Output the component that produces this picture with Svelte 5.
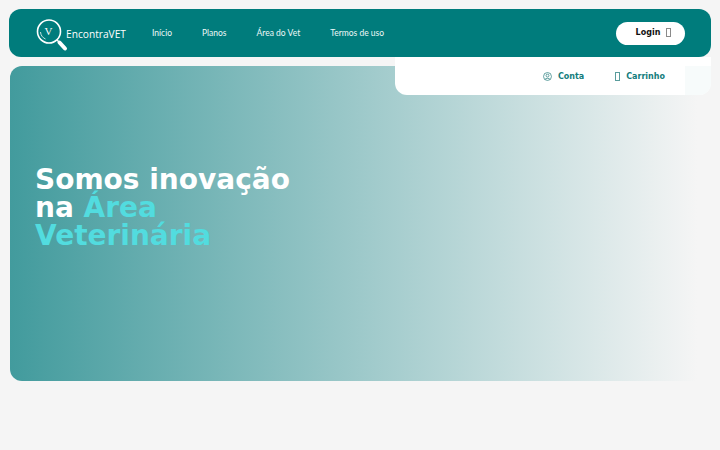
<script>
  const links = ['Início', 'Planos', 'Área do Vet', 'Termos de uso']
</script>

<div class="page">
  <header class="top">
    <a class="brand" href="#home">
      <svg class="logo" width="32" height="34" viewBox="0 0 32 34" aria-hidden="true">
        <circle cx="13" cy="12.5" r="11.5" fill="none" stroke="#fff" stroke-width="1.6" />
        <path d="M4.5 13a8.5 8.5 0 0 0 5 7" fill="none" stroke="#fff" stroke-width="0.8" />
        <path d="M21 21l2 2" stroke="#fff" stroke-width="1.5" />
        <path d="M23.5 23.5l5.5 6" stroke="#fff" stroke-width="4" stroke-linecap="round" />
        <text x="12.5" y="15.5" text-anchor="middle" class="v">V</text>
      </svg>
      <span class="name">EncontraVET</span>
    </a>
    <nav class="links">
      {#each links as l}
        <a href="#home">{l}</a>
      {/each}
    </nav>
    <button class="login">Login <i class="tofu"></i></button>
  </header>

  <div class="panel">
    <a class="act" href="#home">
      <svg width="9" height="9" viewBox="0 0 10 10" aria-hidden="true">
        <circle cx="5" cy="5" r="4.4" fill="none" stroke="#2a7f7f" stroke-width="0.8" />
        <circle cx="5" cy="4" r="1.6" fill="none" stroke="#2a7f7f" stroke-width="0.8" />
        <path d="M2.2 8.2C3 6.6 7 6.6 7.8 8.2" fill="none" stroke="#2a7f7f" stroke-width="0.8" />
      </svg>
      Conta
    </a>
    <a class="act" href="#home"><i class="tofu teal"></i> Carrinho</a>
  </div>

  <section class="hero">
    <h1>Somos inovação<br />na <span>Área Veterinária</span></h1>
  </section>
</div>

<style>
  :global(body) { background: #f5f5f5; }
  .page { position: relative; padding: 9px 9px 0; height: 441px; box-sizing: border-box; width: 720px; }
  .top { height: 48px; background: #007c7c; border-radius: 12px; display: flex; align-items: center; padding: 0 26px 0 27px; }
  .brand { display: flex; align-items: center; text-decoration: none; margin-top: 5px; }
  .logo { display: block; }
  .v { font: 11px "Liberation Serif", serif; fill: #fff; }
  .name { font: 10.2px "Open Sans", sans-serif; color: #fff; margin-left: -2px; margin-top: -3px; }
  .links { display: flex; gap: 30px; margin-left: 26px; }
  .links a { font: 8.5px Lato, sans-serif; color: #eef8f8; text-decoration: none; }
  .login { margin-left: auto; width: 69px; height: 23px; border: 0; border-radius: 12px; background: #fff; color: #111; font: bold 8px "DejaVu Sans", sans-serif; padding: 0 0 2px 6px; display: flex; align-items: center; justify-content: center; gap: 6px; }
  .tofu { display: inline-block; width: 3px; height: 7px; border: 1px solid #8a8a8a; }
  .tofu.teal { border-color: #5a9c9c; }
  .panel { position: absolute; left: 395px; top: 57px; width: 316px; height: 38px; background: #fff; border-radius: 0 0 12px 12px; display: flex; justify-content: flex-end; align-items: center; gap: 31px; padding-right: 46px; box-sizing: border-box; }
  .panel::after { content: ""; position: absolute; right: 0; bottom: 0; width: 26px; height: 29px; background: #f7fbfb; border-radius: 0 0 12px 0; }
  .act { display: flex; align-items: center; gap: 6px; font: bold 8px "DejaVu Sans", sans-serif; color: #137c7c; text-decoration: none; }
  .hero { margin: 9px 0 0 1px; height: 315px; border-radius: 12px; background: linear-gradient(90deg, #429b9d 0%, #f5f5f5 98%); display: flex; align-items: center; padding-left: 25px; }
  h1 { margin: 0 0 32px; width: 270px; font: bold 28px/28px "DejaVu Sans", sans-serif; color: #fff; }
  h1 span { color: #52dcdf; }
</style>
